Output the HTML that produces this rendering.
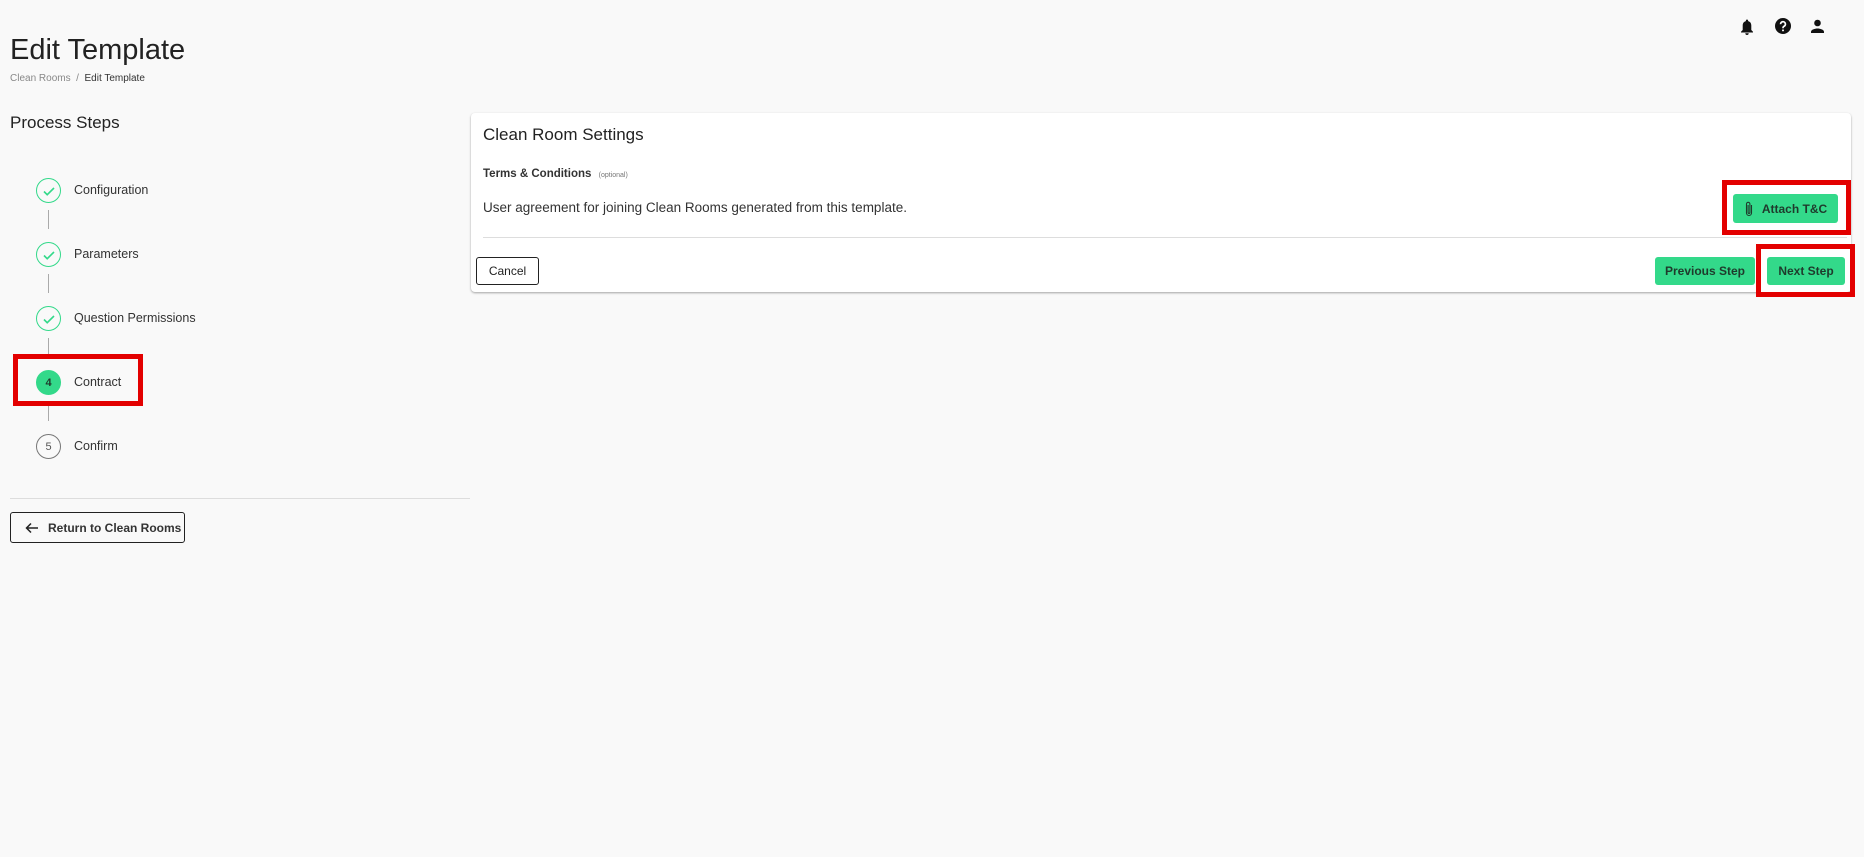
<!DOCTYPE html>
<html><head><meta charset="utf-8"><style>
*{box-sizing:border-box;margin:0;padding:0}
body{width:1864px;height:857px;background:#f9f9f9;font-family:"Liberation Sans",sans-serif;color:#222;position:relative;overflow:hidden}
.abs{position:absolute}
.circ{position:absolute;left:36px;width:25px;height:25px;border-radius:50%;border:1.5px solid #33d98a;display:flex;align-items:center;justify-content:center;font-size:11px}
.lbl{position:absolute;left:74px;font-size:12.5px;color:#333;line-height:14px}
.vl{position:absolute;left:48px;width:1px;height:19px;background:#aaa}
.btn{position:absolute;background:#33d98a;border-radius:3px;font-size:12px;font-weight:bold;color:#1f3a2c;display:flex;align-items:center;justify-content:center}
.red{position:absolute;border:5px solid #e30000}
</style></head><body>
<div class="abs" style="left:10px;top:33px;font-size:29px;line-height:34px;color:#222">Edit Template</div>
<div class="abs" style="left:10px;top:73px;font-size:10px;line-height:12px;color:#888">Clean Rooms &nbsp;/&nbsp; <span style="color:#333">Edit Template</span></div>
<div class="abs" style="left:10px;top:113px;font-size:17px;line-height:20px;color:#222">Process Steps</div>

<div class="circ" style="top:178px"><svg width="16" height="16" viewBox="0 0 16 16"><path d="M3 8.5l3.2 3.2L13 5" fill="none" stroke="#33d98a" stroke-width="1.6"/></svg></div>
<div class="lbl" style="top:183px">Configuration</div>
<div class="vl" style="top:210px"></div>
<div class="circ" style="top:242px"><svg width="16" height="16" viewBox="0 0 16 16"><path d="M3 8.5l3.2 3.2L13 5" fill="none" stroke="#33d98a" stroke-width="1.6"/></svg></div>
<div class="lbl" style="top:247px">Parameters</div>
<div class="vl" style="top:274px"></div>
<div class="circ" style="top:306px"><svg width="16" height="16" viewBox="0 0 16 16"><path d="M3 8.5l3.2 3.2L13 5" fill="none" stroke="#33d98a" stroke-width="1.6"/></svg></div>
<div class="lbl" style="top:311px">Question Permissions</div>
<div class="vl" style="top:338px"></div>
<div class="circ" style="top:370px;background:#33d98a;font-weight:bold;color:#1f3a2c">4</div>
<div class="lbl" style="top:375px">Contract</div>
<div class="vl" style="top:402px"></div>
<div class="circ" style="top:434px;border-color:#777;color:#555">5</div>
<div class="lbl" style="top:439px">Confirm</div>
<div class="red" style="left:13px;top:354px;width:130px;height:52px"></div>

<div class="abs" style="left:10px;top:498px;width:460px;height:1px;background:#ddd"></div>
<div class="abs" style="left:10px;top:512px;width:175px;height:31px;border:1.5px solid #222;border-radius:3px;font-size:12px;font-weight:bold;color:#333;display:flex;align-items:center;padding-left:14px">
<svg width="14" height="12" viewBox="0 0 14 12" style="margin-right:9px"><path d="M13 6H1.5M6 1.5L1.5 6 6 10.5" fill="none" stroke="#222" stroke-width="1.5"/></svg>Return to Clean Rooms</div>

<div class="abs" style="left:471px;top:113px;width:1380px;height:179px;background:#fff;border-radius:4px;box-shadow:0 1px 2px rgba(0,0,0,.35)"></div>
<div class="abs" style="left:483px;top:125px;font-size:17px;line-height:20px;color:#222">Clean Room Settings</div>
<div class="abs" style="left:483px;top:167px;font-size:11.5px;line-height:14px;font-weight:bold;color:#333">Terms &amp; Conditions <span style="font-size:7px;font-weight:normal;color:#777;margin-left:4px">(optional)</span></div>
<div class="abs" style="left:483px;top:200px;font-size:13.5px;line-height:16px;color:#333">User agreement for joining Clean Rooms generated from this template.</div>
<div class="abs" style="left:483px;top:237px;width:1364px;height:1px;background:#ddd"></div>
<div class="abs" style="left:476px;top:257px;width:63px;height:28px;border:1.5px solid #222;border-radius:3px;font-size:12px;display:flex;align-items:center;justify-content:center;color:#222">Cancel</div>

<div class="btn" style="left:1733px;top:194px;width:105px;height:29px"><svg width="10" height="16" viewBox="0 0 10 16" style="margin-right:8px"><path d="M7.5 4v8a2.5 2.5 0 0 1-5 0V3a1.7 1.7 0 0 1 3.4 0v8.5a.9.9 0 0 1-1.8 0V4" fill="none" stroke="#1f3a2c" stroke-width="1.1"/></svg>Attach T&amp;C</div>
<div class="red" style="left:1722px;top:180px;width:129px;height:55px"></div>
<div class="btn" style="left:1655px;top:257px;width:100px;height:28px">Previous Step</div>
<div class="btn" style="left:1767px;top:257px;width:78px;height:28px">Next Step</div>
<div class="red" style="left:1756px;top:244px;width:99px;height:53px"></div>

<svg class="abs" style="left:1739px;top:18px" width="16" height="18" viewBox="0 0 16 18"><path d="M8 1.5c-.7 0-1.1.5-1.1 1v.6C4.8 3.6 3.7 5.3 3.7 7.5V12L2 13.7v.8h12v-.8L12.3 12V7.5c0-2.2-1.1-3.9-3.2-4.4v-.6c0-.5-.4-1-1.1-1zM6.3 15.3a1.7 1.7 0 0 0 3.4 0z" fill="#111"/></svg>
<svg class="abs" style="left:1775px;top:18px" width="16" height="16" viewBox="0 0 16 16"><circle cx="8" cy="8" r="8" fill="#111"/><path d="M5.6 6.2a2.4 2.4 0 1 1 3.4 2.1c-.7.4-1 .8-1 1.5v.4" fill="none" stroke="#fff" stroke-width="1.7"/><circle cx="8" cy="12.4" r="1" fill="#fff"/></svg>
<svg class="abs" style="left:1810px;top:19px" width="15" height="15" viewBox="0 0 15 15"><circle cx="7.5" cy="4" r="3.3" fill="#111"/><path d="M1 14v-1.3c0-2 4-3.2 6.5-3.2s6.5 1.2 6.5 3.2V14z" fill="#111"/></svg>
</body></html>
